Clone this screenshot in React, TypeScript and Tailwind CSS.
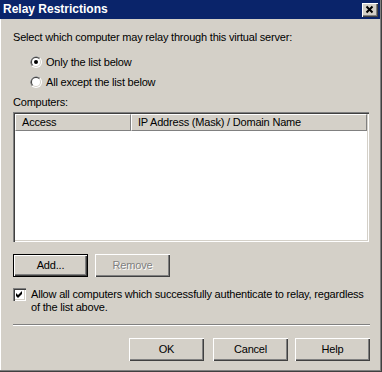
import type { ReactNode } from 'react'
import clsx from 'clsx'

const raised = 'shadow-[inset_1px_1px_#ffffff,inset_-1px_-1px_#404040,inset_-2px_-2px_#808080]'

function Radio({ checked }: { checked?: boolean }) {
  return (
    <svg width="12" height="12" viewBox="0 0 12 12" className="shrink-0">
      <circle cx="6" cy="6" r="6" fill="#ffffff" />
      <path d="M1.76 10.24 A6 6 0 0 1 10.24 1.76 Z" fill="#808080" />
      <circle cx="6" cy="6" r="5" fill="#d4d0c8" />
      <path d="M2.46 9.54 A5 5 0 0 1 9.54 2.46 Z" fill="#404040" />
      <circle cx="6" cy="6" r="4" fill="#ffffff" />
      {checked && <circle cx="6" cy="6" r="2" fill="#000000" />}
    </svg>
  )
}

function Checkbox({ checked }: { checked?: boolean }) {
  return (
    <div className="w-[13px] h-[13px] shrink-0 bg-white shadow-[inset_1px_1px_#808080,inset_2px_2px_#404040,inset_-1px_-1px_#ffffff,inset_-2px_-2px_#d4d0c8]">
      {checked && (
        <svg width="13" height="13" viewBox="0 0 13 13">
          <polygon points="3,5 5,7 9,3 9,6 5,10 3,8" fill="#000000" />
        </svg>
      )}
    </div>
  )
}

function Btn({ children, def, disabled, className }: { children: ReactNode; def?: boolean; disabled?: boolean; className?: string }) {
  return (
    <div className={clsx('w-[75px] h-[23px] shrink-0', def && 'border border-black', className)}>
      <div className={clsx('w-full h-full bg-[#d4d0c8] flex items-center justify-center', raised)}>
        <span className={clsx(disabled ? 'text-[#808080] [text-shadow:1px_1px_0_#ffffff]' : 'text-black')}>{children}</span>
      </div>
    </div>
  )
}

export default function App() {
  return (
    <div className="w-[382px] h-[372px] border-r border-b border-[#404040] font-['Liberation_Sans',Arial,sans-serif] text-[11px] leading-[13px] tracking-[-0.2px] text-black select-none">
      <div className="w-full h-full flex flex-col border-r border-b border-[#808080] bg-[#d4d0c8]">
        {/* Title bar */}
        <div className="h-[19px] shrink-0 bg-[#0a246a] flex items-center justify-between pl-[3px] pr-[2px]">
          <span className="text-white font-bold text-[12px] tracking-normal">Relay Restrictions</span>
          <div className={clsx('w-[16px] h-[14px] bg-[#d4d0c8] flex items-center justify-center', raised)}>
            <svg width="16" height="14" viewBox="0 0 16 14">
              <path d="M4.5 3.5 L10.5 9.5 M10.5 3.5 L4.5 9.5" stroke="#000000" strokeWidth="2" />
            </svg>
          </div>
        </div>

        {/* Body */}
        <div className="flex-1 flex flex-col border-l border-white pl-3">
          <div className="mt-3">Select which computer may relay through this virtual server:</div>

          <div className="mt-2 pl-[17px] flex flex-col">
            <div className="h-[20px] flex items-center gap-[4px]">
              <Radio checked />
              <span>Only the list below</span>
            </div>
            <div className="h-[20px] flex items-center gap-[4px]">
              <Radio />
              <span>All except the list below</span>
            </div>
          </div>

          <div className="mt-1">Computers:</div>

          {/* List view */}
          <div className="mt-[3px] w-[356px] h-[130px] bg-white p-[2px] shadow-[inset_1px_1px_#808080,inset_2px_2px_#404040,inset_-1px_-1px_#ffffff,inset_-2px_-2px_#d4d0c8]">
            <div className="flex h-[17px]">
              <div className="w-[116px] flex items-center pl-[6px] bg-[#d4d0c8] border-t border-l border-white border-r border-b border-r-[#808080] border-b-[#808080]">
                Access
              </div>
              <div className="flex-1 flex items-center pl-[6px] bg-[#d4d0c8] border-t border-l border-white border-r border-b border-r-[#808080] border-b-[#808080]">
                IP Address (Mask) / Domain Name
              </div>
            </div>
          </div>

          <div className="mt-3 flex gap-[7px]">
            <Btn def>Add...</Btn>
            <Btn disabled>Remove</Btn>
          </div>

          <div className="mt-[11px] flex items-start gap-[5px]">
            <Checkbox checked />
            <div className="w-[340px]">
              Allow all computers which successfully authenticate to relay, regardless of the list above.
            </div>
          </div>

          <div className="mt-[10px] w-[357px] h-[2px] border-t border-b border-t-[#808080] border-b-white" />

          <div className="mt-3 w-[357px] flex justify-end">
            <Btn>OK</Btn>
            <Btn className="ml-[9px]">Cancel</Btn>
            <Btn className="ml-[7px]">Help</Btn>
          </div>
        </div>
      </div>
    </div>
  )
}
